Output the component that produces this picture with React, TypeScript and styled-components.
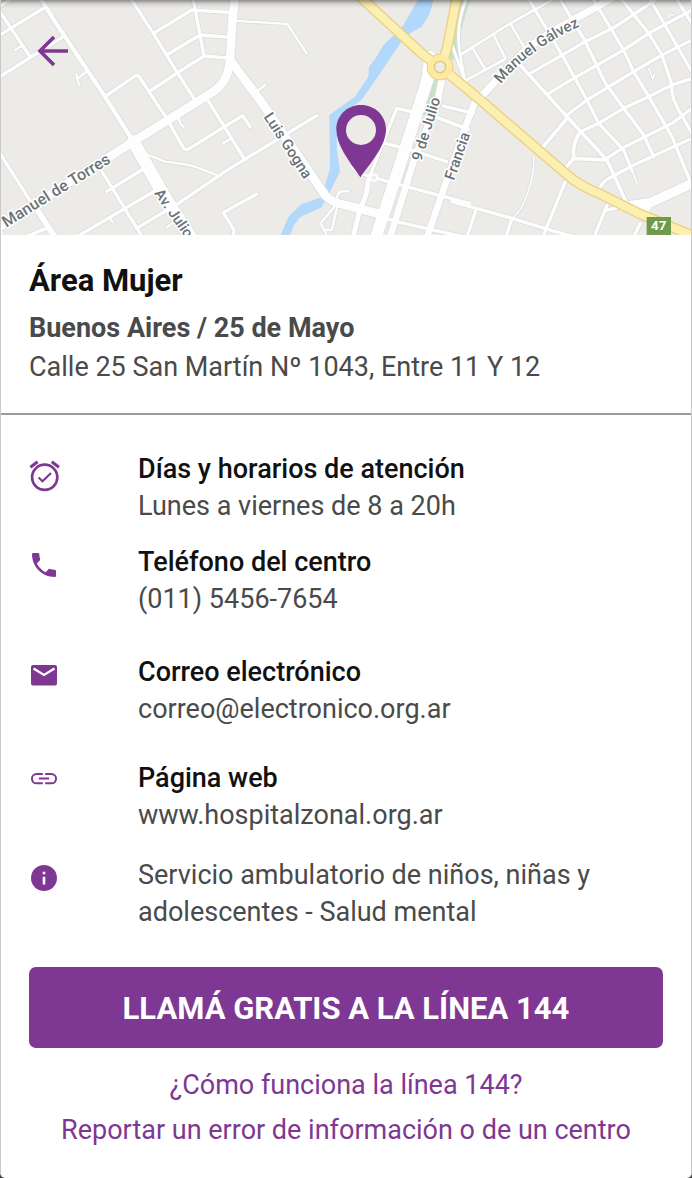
import React from 'react';
import styled, { createGlobalStyle } from 'styled-components';

const PURPLE = '#7e3893';

const GlobalStyle = createGlobalStyle`
  * { box-sizing: border-box; }
  html { background: #3c3c3c; }
  body {
    margin: 0;
    font-family: Roboto, 'Liberation Sans', sans-serif;
    font-size: 27px;
    line-height: 37px;
    color: #4a4a4a;
  }
  h1, h2, h3, p { margin: 0; }
`;

const Page = styled.main`
  min-height: 100vh;
  display: flex;
  flex-direction: column;
  background: #fff;
  border: 0 solid #c9c9c9;
  border-width: 0 1px;
  border-radius: 0 0 5px 5px;
  overflow: hidden;
`;

const MapHeader = styled.header`
  position: relative;
  height: 235px;
  background: #ecebe8;
`;

const MapDrawing = styled.svg`
  display: block;
  width: 100%;
  height: 100%;
`;

const MapShade = styled.div`
  position: absolute;
  inset: 0 0 auto;
  height: 8px;
  background: linear-gradient(rgba(0, 0, 0, 0.4), rgba(0, 0, 0, 0.1) 50%, transparent);
`;

const BackButton = styled.button`
  position: absolute;
  top: 27px;
  left: 28px;
  width: 48px;
  height: 48px;
  padding: 0;
  border: 0;
  background: none;
  cursor: pointer;
  svg { display: block; }
`;

const Summary = styled.section`
  padding: 26px 28px;
  border-bottom: 2px solid #9b9b9b;
`;

const Title = styled.h1`
  font-size: 31px;
  line-height: 40px;
  font-weight: 700;
  color: #111;
`;

const Place = styled.h2`
  margin-top: 8px;
  font-size: 27px;
  line-height: 38px;
  font-weight: 700;
`;

const Address = styled.p`
  line-height: 40px;
`;

const Details = styled.div`
  display: flex;
  flex-direction: column;
  padding: 36px 28px 0;
`;

const Row = styled.section<{ $gap: number }>`
  display: grid;
  grid-template-columns: 109px 1fr;
  margin-bottom: ${(p) => p.$gap}px;
`;

const RowIcon = styled.svg`
  width: 32px;
  height: 50px;
  fill: ${PURPLE};
`;

const RowTitle = styled.h3`
  font-size: 27px;
  line-height: 37px;
  font-weight: 500;
  color: #111;
`;

const RowText = styled.p``;

const Actions = styled.footer`
  display: flex;
  flex-direction: column;
  align-items: center;
  padding: 0 28px 24px;
`;

const CallButton = styled.button`
  width: 100%;
  height: 81px;
  margin-bottom: 15px;
  padding: 2px 0 0;
  border: 0;
  border-radius: 7px;
  background: ${PURPLE};
  color: #fff;
  font: 700 31px Roboto, 'Liberation Sans', sans-serif;
  cursor: pointer;
`;

const TextLink = styled.a`
  line-height: 45px;
  color: ${PURPLE};
  text-decoration: none;
  text-align: center;
`;

type Road = { d: string; w: number; x: number };

const WEST = 0;
const MIDDLE = 690;
const EAST = 1356;

const roads: Road[] = [
  { x: WEST, w: 10, d: 'M0 105L132 24M0 18L30 0M0 35L90 170M0 230L190 110M315 290L405 228Q413 223 418 231L500 355M460 100L575 30L700 38M500 165L600 105L700 112M455 270L530 220L612 168L700 175M580 0L600 105L612 168' },
  { x: WEST, w: 10, d: 'M395 0L460 100L530 215L585 300M500 355L548 440Q555 454 568 446L665 385L728 347L750 380M620 295L735 480M535 610L690 505L950 347M300 505L445 740M320 575L425 510M240 705L375 625L470 570M410 685L535 610M0 460L165 720M65 715L140 685M115 628L175 720M720 610L670 638L702 690L700 720M670 638L770 582' },
  { x: WEST, w: 7, d: 'M45 150L65 138M260 213L232 237L229 222M232 237L238 255M535 350Q540 375 550 380M670 430L692 416M445 465L495 485Q560 492 585 500L650 525M330 655L338 667M500 682L520 668' },
  { x: WEST, w: 13, d: 'M125 0L165 65L315 290L400 425' },
  { x: MIDDLE, w: 7, d: 'M10 62L172 72L230 160M80 275L105 255M355 573L332 575Q318 582 320 612L272 670L290 705M285 690L305 690L322 620M365 500L385 520L435 533' },
  { x: MIDDLE, w: 10, d: 'M545 335L500 325L415 540M640 318L730 340M620 352L715 388M465 430L550 452L650 485M415 528L540 563L720 610M340 615L500 665L720 715' },
  { x: MIDDLE, w: 15, d: 'M415 540Q412 590 390 625L368 720' },
  { x: EAST, w: 8, d: 'M42 0Q12 70 22 150L38 240M0 135L38 240M25 165L175 70L300 0M40 242L160 177M62 145L98 205M125 105L160 175M175 70L215 140' },
  { x: EAST, w: 10, d: 'M235 220L400 125L490 80L610 0M290 280L365 235L515 150L590 100L720 30M345 345L405 300L545 215L630 165L720 120M385 395L440 370L515 325L590 290L660 255L720 235M465 475L510 445L600 400L660 370L720 325M440 575Q445 545 480 530L545 495L720 415' },
  { x: EAST, w: 10, d: 'M232 0L330 165L405 300L440 370L515 450L540 512M325 0L400 125L460 250L515 325L575 405L605 470M425 0L515 150L545 215L590 290L660 410L715 545M510 0L590 100L630 165L660 255Q655 285 680 330L720 400M595 0L720 215M675 0L720 70' },
  { x: EAST, w: 11, d: 'M200 190L345 350L465 480L525 612M265 450L345 355M385 395Q360 430 365 475L335 510M365 475L460 480' },
  { x: EAST, w: 10, d: 'M340 545L275 705M0 605L180 655L300 692L400 720M70 635L45 710M180 655L162 710M465 615L427 710M565 670L545 710M460 632L530 615' },
  { x: EAST, w: 5, d: 'M246 470Q248 540 212 615Q200 640 180 655M540 512L555 550M590 205L602 238L608 220M650 52Q652 38 665 45' },
  { x: MIDDLE, w: 20, d: 'M635 240L622 310L555 470L478 720M735 305L712 365L640 570L588 720' },
  { x: MIDDLE, w: 26, d: 'M0 180L90 300L285 585Q305 608 345 615L450 642' },
  { x: MIDDLE, w: 36, d: 'M600 170L592 240L505 510L435 720' },
  { x: WEST, w: 26, d: 'M705 -10L697 60L690 180Q685 245 640 275L400 425L0 680' },
  { x: WEST, w: 38, d: 'M400 425L500 600L590 740' },
  { x: EAST, w: 22, d: 'M80 298L190 180Q240 130 300 95L480 -5' },
  { x: EAST, w: 28, d: 'M525 618L600 606L725 548M570 640L590 610' },
];

const yellowRoads =
  'M1080 -10L1270 165L1320 200L1441 300L1696 520Q1741 560 1796 580L1916 640L2096 715M1370 -5L1348 110Q1338 165 1325 190';

function CityMap() {
  return (
    <MapDrawing viewBox="0 0 2076 705" preserveAspectRatio="xMidYMid slice" role="img" aria-label="Mapa de 25 de Mayo">
      <rect width="2076" height="705" fill="#ecebe8" />
      <path
        transform="translate(690 0)"
        fill="#c5e3c3"
        d="M690 0L720 0L692 95L690 160L665 182L650 150ZM605 240L628 240L610 310L590 345L575 345Z"
      />
      <path
        transform="translate(690 0)"
        fill="#b2d9fb"
        d="M563 0L610 0L600 40L575 80L545 97L520 117L440 235L395 300L345 335L322 365L320 440L330 515L305 565L275 622L210 652L192 675L178 710L150 710L175 650L215 612L275 592L300 505L298 345L375 290L415 230L417 200L435 178L460 135L515 85Z"
      />
      <g fill="none" stroke="#dcdde3" strokeLinecap="round" strokeLinejoin="round">
        {roads.map((r, i) => (
          <path key={i} d={r.d} transform={`translate(${r.x} 0)`} strokeWidth={r.w + 5} />
        ))}
      </g>
      <g fill="none" stroke="#fefefe" strokeLinecap="round" strokeLinejoin="round">
        {roads.map((r, i) => (
          <path key={i} d={r.d} transform={`translate(${r.x} 0)`} strokeWidth={r.w} />
        ))}
      </g>
      <circle cx="1122" cy="533" r="10" fill="#ecebe8" stroke="#fefefe" strokeWidth="7" />
      <g fill="none" strokeLinejoin="round">
        <path d={yellowRoads} stroke="#ecd07e" strokeWidth="32" />
        <circle cx="1320" cy="201" r="28" stroke="#ecd07e" strokeWidth="24" />
        <path d={yellowRoads} stroke="#fcefb2" strokeWidth="24" />
        <circle cx="1320" cy="201" r="27" stroke="#fbe9a4" strokeWidth="20" />
        <circle cx="1320" cy="201" r="17" fill="#ecebe8" stroke="#e6c872" strokeWidth="4" />
      </g>
      <path id="galvez" d="M1503 252Q1590 140 1775 63" fill="none" />
      <g
        fontFamily="Roboto, 'Liberation Sans', sans-serif"
        fontSize="45"
        fontWeight="500"
        fill="#6a7277"
        stroke="#fff"
        strokeWidth="9"
        strokeLinejoin="round"
        paintOrder="stroke"
      >
        <text fontSize="48" transform="translate(-11 702) rotate(-32)">y Manuel de Torres</text>
        <text fontSize="44" transform="translate(462 580) rotate(55)">Av. Julio</text>
        <text transform="translate(790 350) rotate(57)">Luis Gogna</text>
        <text transform="translate(1264 485) rotate(-73)">9 de Julio</text>
        <text transform="translate(1362 543) rotate(-71)">Francia</text>
        <text><textPath href="#galvez">Manuel Gálvez</textPath></text>
      </g>
      <rect x="1940" y="651" width="73" height="60" fill="#6f9a4c" />
      <text x="1976" y="691" textAnchor="middle" fontFamily="Roboto, sans-serif" fontSize="40" fontWeight="700" fill="#fff">
        47
      </text>
      <path
        fill={PURPLE}
        fillRule="evenodd"
        d="M1083 315C1041 315 1009 347 1009 388C1009 435 1045 480 1081 532C1119 480 1158 435 1158 388C1158 347 1125 315 1083 315ZM1083 345A45 45 0 1 1 1083 435A45 45 0 1 1 1083 345Z"
      />
    </MapDrawing>
  );
}

const icons = {
  alarm: (
    <g fill="none" stroke={PURPLE}>
      <circle cx="15.7" cy="26.3" r="12.6" strokeWidth="2.7" />
      <path d="M1.4 16.3L8.6 10.7M22.8 10.7L30 16.3" strokeWidth="3" />
      <path d="M9.6 26.4L13.5 30.3L22 22" strokeWidth="2.1" />
    </g>
  ),
  phone: (
    <path
      transform="translate(-1 5) scale(1.3333)"
      d="M6.62 10.79c1.44 2.83 3.76 5.14 6.59 6.59l2.2-2.2c.27-.27.67-.36 1.02-.24 1.12.37 2.33.57 3.57.57.55 0 1 .45 1 1V20c0 .55-.45 1-1 1-9.39 0-17-7.61-17-17 0-.55.45-1 1-1h3.5c.55 0 1 .45 1 1 0 1.25.2 2.45.57 3.57.11.35.03.74-.25 1.02l-2.2 2.2z"
    />
  ),
  mail: (
    <>
      <rect x="2" y="11" width="26" height="20.5" rx="2" />
      <path d="M4.5 14.5L15 21L25.5 14.5" fill="none" stroke="#fff" strokeWidth="2.2" />
    </>
  ),
  link: (
    <path
      d="M13.8 14H7.6A4.65 4.65 0 0 0 7.6 23.3H13.8M16.2 14H22.4A4.65 4.65 0 0 1 22.4 23.3H16.2M9.8 18.6H20.2"
      fill="none"
      stroke={PURPLE}
      strokeWidth="2"
    />
  ),
  info: (
    <>
      <circle cx="15" cy="21" r="13" />
      <path d="M13.7 14.7H16.3V17.2H13.7ZM13.7 19.8H16.3V27.5H13.7Z" fill="#fff" />
    </>
  ),
};

const rows: { icon: keyof typeof icons; title?: string; text: string; gap: number }[] = [
  { icon: 'alarm', title: 'Días y horarios de atención', text: 'Lunes a viernes de 8 a 20h', gap: 19 },
  { icon: 'phone', title: 'Teléfono del centro', text: '(011) 5456-7654', gap: 36 },
  { icon: 'mail', title: 'Correo electrónico', text: 'correo@electronico.org.ar', gap: 32 },
  { icon: 'link', title: 'Página web', text: 'www.hospitalzonal.org.ar', gap: 23 },
  { icon: 'info', text: 'Servicio ambulatorio de niños, niñas y adolescentes - Salud mental', gap: 36 },
];

export default function App() {
  return (
    <>
      <GlobalStyle />
      <Page>
        <MapHeader>
          <CityMap />
          <MapShade />
          <BackButton type="button" aria-label="Volver">
            <svg width="48" height="48" viewBox="0 0 48 48" fill="none" stroke={PURPLE} strokeWidth="3.6">
              <path d="M39 24H11M25 10L11 24L25 38" />
            </svg>
          </BackButton>
        </MapHeader>
        <Summary>
          <Title>Área Mujer</Title>
          <Place>Buenos Aires / 25 de Mayo</Place>
          <Address>Calle 25 San Martín Nº 1043, Entre 11 Y 12</Address>
        </Summary>
        <Details>
          {rows.map((row) => (
            <Row key={row.icon} $gap={row.gap}>
              <RowIcon viewBox="0 0 32 50" aria-hidden="true">
                {icons[row.icon]}
              </RowIcon>
              <div>
                {row.title && <RowTitle>{row.title}</RowTitle>}
                <RowText>{row.text}</RowText>
              </div>
            </Row>
          ))}
        </Details>
        <Actions>
          <CallButton type="button">LLAMÁ GRATIS A LA LÍNEA 144</CallButton>
          <TextLink href="#linea-144">¿Cómo funciona la línea 144?</TextLink>
          <TextLink href="#reportar">Reportar un error de información o de un centro</TextLink>
        </Actions>
      </Page>
    </>
  );
}
